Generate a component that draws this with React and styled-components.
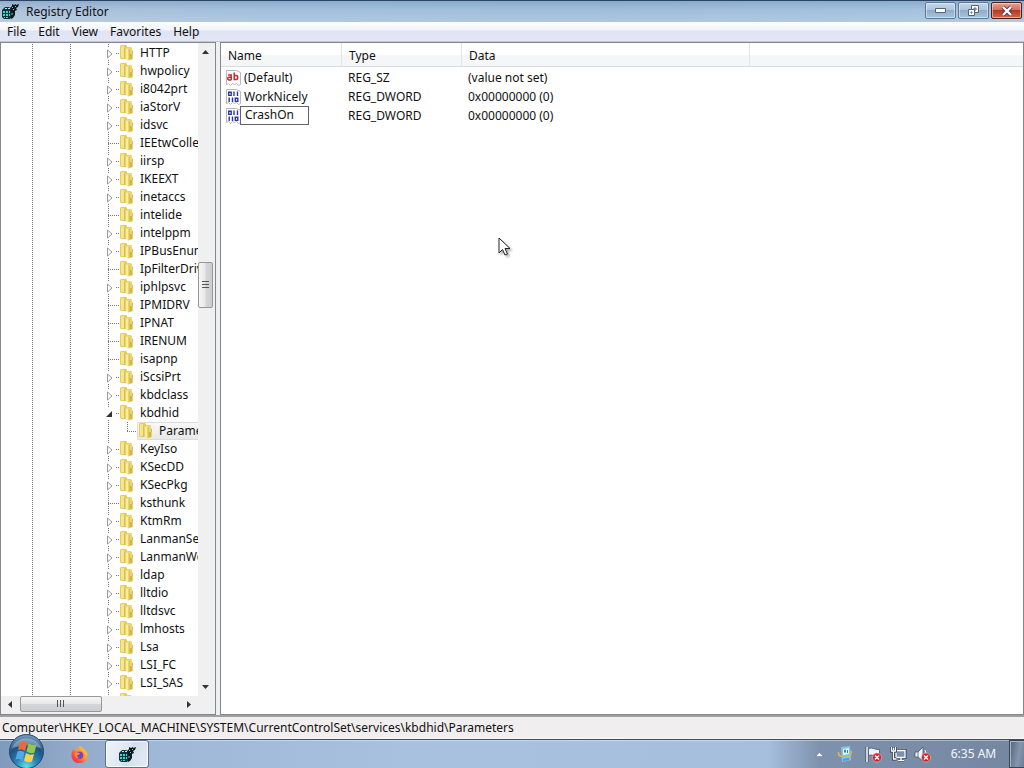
// src/App.jsx

import React, { useState } from 'react';
import styled, { createGlobalStyle } from 'styled-components';

const GlobalStyle = createGlobalStyle`
    * { box-sizing: border-box; }
    body {
        margin: 0;
        overflow: hidden;
        background: #f0f0f0;
    }
    body, button, input, table {
        font-family: 'Noto Sans', 'Open Sans', sans-serif;
        font-size: 12px;
        line-height: 18px;
        color: #111;
    }
    button, input {
        margin: 0;
        padding: 0;
        border: none;
        background: none;
    }
`;

// --- Window frame ---
const Desktop = styled.div`
    height: 100vh;
    display: flex;
    flex-direction: column;
`;

const TitleBar = styled.header`
    height: 22px;
    display: flex;
    align-items: center;
    gap: 7px;
    padding-left: 2px;
    border-top: 1px solid #2c4564;
    background:
        linear-gradient(rgba(70, 110, 155, 0.25), rgba(255, 255, 255, 0) 40%, rgba(255, 255, 255, 0.15)),
        linear-gradient(90deg, #adc3db 0%, #a3bfdc 25%, #9fbddb 60%, #a5c2de 100%);
`;

const Title = styled.h1`
    flex: 1;
    margin: 0;
    font-size: 12px;
    font-weight: 400;
    line-height: 18px;
`;

const WindowButtons = styled.div`
    align-self: flex-start;
    display: flex;
    gap: 2px;
    padding: 1px 2px 0 0;
`;

const WindowButton = styled.button`
    width: 31px;
    height: 17px;
    display: grid;
    place-items: center;
    border: 1px solid ${p => (p.$danger ? '#4c1d1b' : '#5c7896')};
    border-radius: 2px;
    box-shadow: inset 0 0 0 1px rgba(255, 255, 255, 0.45);
    background: ${p => (p.$danger
        ? 'linear-gradient(#e3a292, #d0705c 45%, #b83822 50%, #cf6a50)'
        : 'linear-gradient(#c3d6e8, #adc5dd 45%, #8fadcb 50%, #a9c4dc)')};
`;

const MenuBar = styled.nav`
    height: 20px;
    display: flex;
    align-items: center;
    padding-left: 7px;
    gap: 12px;
    border-bottom: 1px solid #c4c6d2;
    background: linear-gradient(#fdfdff, #f2f4fb 40%, #e0e3f3 50%, #e4e7f5);
`;

const MenuItem = styled.button`
    line-height: 18px;
`;

const Panes = styled.main`
    flex: 1;
    min-height: 0;
    display: grid;
    grid-template-columns: 216px 1fr;
    gap: 4px;
    background: #f0f0f0;
`;

const Pane = styled.section`
    min-width: 0;
    min-height: 0;
    border: 1px solid #828790;
    background: #fff;
`;

// --- Key tree ---
const TreePane = styled(Pane)`
    display: grid;
    grid-template-columns: 1fr 17px;
    grid-template-rows: 1fr 18px;
`;

const Tree = styled.ul`
    margin: 0;
    padding: 1px 0 0;
    list-style: none;
    min-height: 0;
    overflow: hidden;
`;

const TreeRow = styled.li`
    height: 18px;
    display: flex;
    white-space: nowrap;
`;

const Guide = styled.span`
    flex: none;
    width: ${p => p.$width}px;
    background: repeating-linear-gradient(#777 0 1px, transparent 1px 2px) right / 1px 100% no-repeat;
`;

const Branch = styled.span`
    flex: none;
    display: flex;
    padding-left: ${p => (p.$child ? 0 : 34)}px;
`;

const Toggle = styled.button`
    display: flex;
`;

const KeyLabel = styled.span`
    flex: 1;
    display: flex;
    align-items: center;
    gap: 6px;
    overflow: hidden;

    svg { flex: none; }

    ${p => p.$selected && `
        border: 1px solid #dcdcdc;
        border-right: none;
        border-radius: 2px 0 0 2px;
        padding-left: 1px;
        background: linear-gradient(#f8f8f8, #e8e8e8);
    `}
`;

const ScrollTrack = styled.div`
    display: flex;
    flex-direction: ${p => (p.$vertical ? 'column' : 'row')};
    background: #f0f0f0;
    padding: ${p => (p.$vertical ? '0 2px 0 0' : '0 0 2px')};
`;

const ScrollArrow = styled.button`
    flex: none;
    width: ${p => (p.$vertical ? 'auto' : '19px')};
    height: ${p => (p.$vertical ? '19px' : 'auto')};
    display: grid;
    place-items: center;
`;

const ScrollSpace = styled.span`
    flex: ${p => p.$grow} 1 0;
`;

const ScrollThumb = styled.button`
    flex: none;
    width: ${p => (p.$vertical ? 'auto' : '82px')};
    height: ${p => (p.$vertical ? '46px' : 'auto')};
    display: grid;
    place-items: center;
    border: 1px solid #979797;
    border-radius: 2px;
    background: linear-gradient(${p => (p.$vertical ? '90deg' : '180deg')}, #f6f6f6, #e8e8e9 48%, #d4d5d7 52%, #cdced1);
`;

const Corner = styled.div`
    background: #f0f0f0;
`;

// --- Value list ---
const ValueTable = styled.table`
    width: 100%;
    table-layout: fixed;
    border-collapse: separate;
    border-spacing: 0;

    th {
        height: 24px;
        padding: 2px 0 0 7px;
        font-weight: 400;
        text-align: left;
        border-right: 1px solid #e2e5e9;
        border-bottom: 1px solid #d9dcdf;
        background: linear-gradient(#fff 50%, #f5f6f7 55%);
    }
    th:last-child { border-right: none; }
    td {
        height: 19px;
        padding: 0 0 0 6px;
        white-space: nowrap;
    }
    td:first-child { padding-left: 5px; }
    tbody::before {
        content: '';
        display: block;
        height: 1px;
    }
`;

const NameCell = styled.div`
    height: 19px;
    display: flex;
    align-items: center;
    gap: ${p => (p.$editing ? 0 : 3)}px;

    svg { flex: none; }
`;

const NameInput = styled.input`
    width: 69px;
    height: 19px;
    margin-left: -1px;
    padding: 0 4px 2px;
    border: 1px solid #646464;
    background: #fff;
    outline: none;
`;

const StatusBar = styled.footer`
    height: 24px;
    padding: 2px 2px 0;
    border-top: 2px solid #a0a0a0;
    border-bottom: 1px solid #f8f8f8;
    background: #f0eeee;
    white-space: nowrap;
`;

// --- Taskbar ---
const Taskbar = styled.div`
    height: 29px;
    display: flex;
    border-top: 1px solid #3d4b5e;
    box-shadow: inset 0 1px 0 rgba(255, 255, 255, 0.4);
    background: linear-gradient(90deg, #7f9abb 0%, #92a9c8 7%, #9fb8d8 15%, #a7c1de 40%, #a5bfdd 75%, #7f92ad 80%, #7486a0 100%);
`;

const StartButton = styled.button`
    position: relative;
    width: 54px;

    svg {
        position: absolute;
        left: 8px;
        bottom: -1px;
    }
`;

const TaskButton = styled.button`
    width: ${p => (p.$active ? 44 : 51)}px;
    display: grid;
    place-items: center;
    ${p => p.$active && `
        border: 1px solid #5e6f86;
        border-radius: 3px;
        box-shadow: inset 0 0 0 1px rgba(255, 255, 255, 0.8);
        background: linear-gradient(115deg, #eef4fa, #dde6f1 50%, #d2deec 52%, #e4ecf5);
    `}
`;

const Tray = styled.div`
    margin-left: auto;
    display: flex;
    align-items: center;
`;

const TrayButton = styled.button`
    width: ${p => p.$width || 25}px;
    display: grid;
    place-items: center;
`;

const Clock = styled.time`
    width: 71px;
    text-align: center;
    color: #f4f7fb;
`;

const ShowDesktop = styled.button`
    align-self: stretch;
    width: 15px;
    border: 1px solid #3a4656;
    border-right: none;
    box-shadow: inset 1px 1px 0 #a8b5c6;
    background: linear-gradient(100deg, #55657b, #8495ad 60%, #6c7d95);
`;

const Pointer = styled.svg`
    position: fixed;
    left: 498px;
    top: 237px;
    pointer-events: none;
    filter: drop-shadow(2px 2px 1px rgba(0, 0, 0, 0.3));
`;

// --- Icons ---
function RegeditIcon() {
    return (
        <svg width="17" height="17" viewBox="0 0 17 17" aria-hidden="true">
            <path d="M0 7l3-3h4l4 3v6l-3 3H2l-2-2z" fill="#0d3438" />
            <path d="M1 8h2v2H1zM4 8h2v2H4zM7 8h1v2H7zM1 11h2v2H1zM4 11h2v2H4zM7 11h1v2H7zM2 14h1v1H2zM4 14h2v1H4z" fill="#43d3cc" />
            <path d="M3 5h2v1H3zM6 5h2v1H6z" fill="#a8efea" />
            <path d="M8 5l2-2V1l2 1 2-1v1l3-1-1 3-2 1 1 2-2 1v4l-2 3-2 1V8z" fill="#11191c" />
            <path d="M10 4l1 1M13 3l1 1M11 7l1-1M10 10v2" stroke="#5fd6d0" />
        </svg>
    );
}

function FolderIcon() {
    return (
        <svg width="14" height="16" viewBox="0 0 14 16" aria-hidden="true">
            <path d="M0 1l1-1h5l1 1v13H1l-1-1z" fill="#e6cc58" />
            <path d="M1 1h3v12H1z" fill="#f4e68e" />
            <path d="M7 2h4l1 1v2l1 1v8l-2 1H7z" fill="#ecd66c" />
            <path d="M5 3l4 1v12l-4-2z" fill="#f8eda0" />
            <path d="M9 4v11M5 3v11" stroke="#c9a93a" strokeWidth=".8" />
            <path d="M10 9h2v5h-2z" fill="#d2b444" />
            <path d="M12 6h1v3h-1z" fill="#b5c289" />
        </svg>
    );
}

function ValueIcon({ binary }) {
    return (
        <svg width="15" height="16" viewBox="0 0 15 16" aria-hidden="true">
            <path d="M.5.5h10l4 2v12l-2 1-2-2-2 1-2-1-2 2-2-2-2 1z" fill="#fdfdff" stroke="#b5b8c4" />
            {binary ? (
                <g fill="none" stroke="#2a35a8" strokeWidth="1.400">
                    <path d="M2.700 3.200h2.500v3.200H2.700zM8 2.500v4.500M11.500 2.500v4.500M3.200 8.500v4.500M6.500 8.500v4.500M9.300 9.200h2.500v3.200H9.300z" />
                </g>
            ) : (
                <g fill="none" stroke="#c02b2b" strokeWidth="1.500">
                    <path d="M2 5h3.200v5.200M5 7.300H3a1.300 1.300 0 0 0 0 2.600h2M8.200 2.500v7.700M8.200 5.500h2q1.500 0 1.500 2t-1.500 2h-2" />
                </g>
            )}
        </svg>
    );
}

function BranchLines({ kind }) {
    return (
        <svg width="15" height="18" viewBox="0 0 15 18" shapeRendering="crispEdges" aria-hidden="true">
            <g stroke="#777" strokeDasharray="1 1">
                {kind === 'leaf'
                    ? <path d="M3.500 0v18M3 9.500h12" />
                    : <path d="M3.500 0v4M3.500 16v2M11 9.500h4" />}
            </g>
            {kind === 'closed' && (
                <path d="M2.500 6v8l4.500-4z" fill="#fff" stroke="#999" shapeRendering="auto" />
            )}
            {kind === 'open' && (
                <path d="M7 7v6H1z" fill="#333" shapeRendering="auto" />
            )}
        </svg>
    );
}

function ChildLines() {
    return (
        <svg width="28" height="18" viewBox="0 0 28 18" shapeRendering="crispEdges" aria-hidden="true">
            <path d="M18.500 0v10M18 9.500h10" fill="none" stroke="#777" strokeDasharray="1 1" />
        </svg>
    );
}

function Arrow({ direction }) {
    const paths = {
        up: 'M0 5l3.500-4L7 5z',
        down: 'M0 2h7L3.500 6z',
        left: 'M5 0v7L1 3.500z',
        right: 'M2 0v7l4-3.500z',
    };
    return (
        <svg width="7" height="7" viewBox="0 0 7 7" aria-hidden="true">
            <path d={paths[direction]} fill="#333" />
        </svg>
    );
}

function Grip({ vertical }) {
    return (
        <svg width="8" height="8" viewBox="0 0 8 8" aria-hidden="true">
            <path
                d={vertical ? 'M0 .5h7M0 3.500h7M0 6.500h7' : 'M.5 0v7M3.500 0v7M6.500 0v7'}
                stroke="#555"
            />
        </svg>
    );
}

function StartOrb() {
    return (
        <svg width="37" height="36" viewBox="0 0 37 36" aria-hidden="true">
            <defs>
                <radialGradient id="orb" cx="50%" cy="95%" r="90%">
                    <stop offset="0" stopColor="#5fe0f6" />
                    <stop offset=".35" stopColor="#2a86b8" />
                    <stop offset=".7" stopColor="#1f5182" />
                    <stop offset="1" stopColor="#6f94b8" />
                </radialGradient>
            </defs>
            <circle cx="18.500" cy="18.500" r="17" fill="url(#orb)" stroke="#24476d" />
            <path d="M4 15a15 13 0 0 1 29 0q-14-5-29 0z" fill="#fff" opacity=".3" />
            <path d="M12 9q4-2 7 1l-2 8q-3-3-7-1z" fill="#ee6a34" />
            <path d="M20.500 10.500q4 3 8 1l-2 8q-4 2-8-1z" fill="#94c84b" />
            <path d="M9.500 18.500q4-2 7 1l-2 8q-3-3-7-1z" fill="#4fa8e8" />
            <path d="M18 20q4 3 8 1l-2 7.500q-4 2-8-1z" fill="#fbd04c" />
        </svg>
    );
}

function FirefoxIcon() {
    return (
        <svg width="17" height="17" viewBox="0 0 17 17" aria-hidden="true">
            <defs>
                <linearGradient id="fox" x1="1" y1="0" x2="0" y2="1">
                    <stop offset="0" stopColor="#ffe14a" />
                    <stop offset=".45" stopColor="#ff9227" />
                    <stop offset=".75" stopColor="#fb3f45" />
                    <stop offset="1" stopColor="#e3207c" />
                </linearGradient>
            </defs>
            <path d="M10 0q1 2 3 3 4 3 3.500 7A8 7.500 0 0 1 .5 9.500Q.5 5 3 2.500q0 1.500 1 2l2-.5q0-2.500 4-4z" fill="url(#fox)" />
            <circle cx="8.600" cy="9.300" r="3.700" fill="#7a42c8" />
            <path d="M3.500 6.500q3-1 5.500 1-1 1.500-3 1.700 0 2 2.500 3Q5 13 4 10z" fill="#ff8a2a" />
        </svg>
    );
}

function ErrorBadge() {
    return (
        <g>
            <circle cx="12" cy="11.500" r="4.500" fill="#d3222a" stroke="#f0c4c4" strokeWidth=".6" />
            <path d="M10 9.500l4 4M14 9.500l-4 4" stroke="#fff" strokeWidth="1.400" />
        </g>
    );
}

function UpdateIcon() {
    return (
        <svg width="16" height="17" viewBox="0 0 16 17" aria-hidden="true">
            <path d="M4 1l9-1 1 14-9 2z" fill="#7fc3ea" />
            <path d="M6 3l6-1v6l-6 1z" fill="#dff4fb" />
            <path d="M7 4l2-.5v3H7z" fill="#3c9950" />
            <path d="M10 4h1v3h-1z" fill="#3a7fc0" />
            <path d="M1.500 6q-.5 5 5 4.500M14 5q1.500 5-4.500 6" fill="none" stroke="#dfb548" strokeWidth="1.600" />
            <path d="M6 13l6-1v2l-6 1z" fill="#4a9fd8" />
        </svg>
    );
}

function FlagIcon() {
    return (
        <svg width="17" height="17" viewBox="0 0 17 17" aria-hidden="true">
            <path d="M2 1v15" stroke="#3b4a5e" strokeWidth="3" />
            <path d="M2 1v15" stroke="#fff" strokeWidth="1.500" />
            <path d="M3.500 2.500q3-1 5 0t6 1v7q-4 0-6-1t-5 0z" fill="#eef1f5" stroke="#46566c" strokeWidth=".8" />
            <ErrorBadge />
        </svg>
    );
}

function NetworkIcon() {
    return (
        <svg width="17" height="17" viewBox="0 0 17 17" aria-hidden="true">
            <path d="M6 4.500h9v7H6zM8 14.500h6M11 12v2" fill="none" stroke="#303d4e" strokeWidth="3" />
            <path d="M6 4.500h9v7H6zM8 14.500h6M11 12v2" fill="#7c92ac" stroke="#fff" strokeWidth="1.300" />
            <path d="M1.500 1v4h4V1M3.500 5v8h3" fill="none" stroke="#303d4e" strokeWidth="3" />
            <path d="M1.500 1v4h4V1M3.500 5v8h3M3.500 2v2" fill="none" stroke="#fff" strokeWidth="1.300" />
        </svg>
    );
}

function VolumeIcon() {
    return (
        <svg width="17" height="17" viewBox="0 0 17 17" aria-hidden="true">
            <path d="M1 6h3l5-5v14l-5-4H1z" fill="#f3f5f8" stroke="#46566c" strokeWidth=".8" />
            <path d="M4 6v5" stroke="#66768c" />
            <path d="M11 4q2 3 0 6" fill="none" stroke="#fff" />
            <ErrorBadge />
        </svg>
    );
}

// closed = has subkeys, leaf = no subkeys
const keys = [
    ['HTTP', 'closed'], ['hwpolicy', 'closed'], ['i8042prt', 'closed'], ['iaStorV', 'closed'],
    ['idsvc', 'closed'], ['IEEtwCollectorService', 'leaf'], ['iirsp', 'closed'], ['IKEEXT', 'closed'],
    ['inetaccs', 'closed'], ['intelide', 'leaf'], ['intelppm', 'closed'], ['IPBusEnum', 'closed'],
    ['IpFilterDriver', 'leaf'], ['iphlpsvc', 'closed'], ['IPMIDRV', 'leaf'], ['IPNAT', 'leaf'],
    ['IRENUM', 'leaf'], ['isapnp', 'leaf'], ['iScsiPrt', 'closed'], ['kbdclass', 'closed'],
    ['kbdhid', 'open'], ['Parameters', 'child'], ['KeyIso', 'closed'], ['KSecDD', 'closed'],
    ['KSecPkg', 'closed'], ['ksthunk', 'leaf'], ['KtmRm', 'closed'], ['LanmanServer', 'closed'],
    ['LanmanWorkstation', 'closed'], ['ldap', 'closed'], ['lltdio', 'closed'], ['lltdsvc', 'closed'],
    ['lmhosts', 'closed'], ['Lsa', 'closed'], ['LSI_FC', 'closed'], ['LSI_SAS', 'closed'],
    ['', 'closed'],
];

const values = [
    { name: '(Default)', type: 'REG_SZ', data: '(value not set)' },
    { name: 'WorkNicely', type: 'REG_DWORD', data: '0x00000000 (0)' },
    { name: 'CrashOn', type: 'REG_DWORD', data: '0x00000000 (0)', editing: true },
];

function KeyRow({ name, kind }) {
    const child = kind === 'child';
    const expandable = kind === 'closed' || kind === 'open';

    return (
        <TreeRow>
            <Guide $width={32} />
            <Guide $width={38} />
            {child && <Guide $width={38} />}
            <Branch $child={child}>
                {child && <ChildLines />}
                {kind === 'leaf' && <BranchLines kind={kind} />}
                {expandable && (
                    <Toggle aria-label={`Toggle ${name}`}><BranchLines kind={kind} /></Toggle>
                )}
            </Branch>
            <KeyLabel $selected={child}>
                <FolderIcon />
                {name}
            </KeyLabel>
        </TreeRow>
    );
}

function App() {
    const [editName, setEditName] = useState('CrashOn');

    return (
        <>
            <GlobalStyle />
            <Desktop>
                <TitleBar>
                    <RegeditIcon />
                    <Title>Registry Editor</Title>
                    <WindowButtons>
                        <WindowButton aria-label="Minimize">
                            <svg width="12" height="6"><path d="M.5.5h10v4H.5z" fill="#fff" stroke="#53647a" /></svg>
                        </WindowButton>
                        <WindowButton aria-label="Restore">
                            <svg width="13" height="12">
                                <path d="M4.500.5h7v7h-7zM7 3h2v2H7z" fill="#fff" stroke="#53647a" />
                                <path d="M1.500 4.500h6v6h-6zM4 7h1v1H4z" fill="#fff" stroke="#53647a" />
                            </svg>
                        </WindowButton>
                        <WindowButton $danger aria-label="Close">
                            <svg width="12" height="10">
                                <path d="M2 1l8 8M10 1L2 9" stroke="#54303a" strokeWidth="4" />
                                <path d="M2 1l8 8M10 1L2 9" stroke="#fff" strokeWidth="2.400" />
                            </svg>
                        </WindowButton>
                    </WindowButtons>
                </TitleBar>

                <MenuBar>
                    {['File', 'Edit', 'View', 'Favorites', 'Help'].map(item => (
                        <MenuItem key={item}>{item}</MenuItem>
                    ))}
                </MenuBar>

                <Panes>
                    <TreePane>
                        <Tree>
                            {keys.map(([name, kind], i) => <KeyRow key={i} name={name} kind={kind} />)}
                        </Tree>
                        <ScrollTrack $vertical>
                            <ScrollArrow $vertical aria-label="Scroll up"><Arrow direction="up" /></ScrollArrow>
                            <ScrollSpace $grow={200} />
                            <ScrollThumb $vertical aria-label="Vertical scroll"><Grip vertical /></ScrollThumb>
                            <ScrollSpace $grow={369} />
                            <ScrollArrow $vertical aria-label="Scroll down"><Arrow direction="down" /></ScrollArrow>
                        </ScrollTrack>
                        <ScrollTrack>
                            <ScrollArrow aria-label="Scroll left"><Arrow direction="left" /></ScrollArrow>
                            <ScrollThumb aria-label="Horizontal scroll"><Grip /></ScrollThumb>
                            <ScrollSpace $grow={1} />
                            <ScrollArrow aria-label="Scroll right"><Arrow direction="right" /></ScrollArrow>
                        </ScrollTrack>
                        <Corner />
                    </TreePane>

                    <Pane>
                        <ValueTable>
                            <colgroup>
                                <col width="121" />
                                <col width="120" />
                                <col width="288" />
                                <col />
                            </colgroup>
                            <thead>
                                <tr><th>Name</th><th>Type</th><th>Data</th><th aria-label="Empty" /></tr>
                            </thead>
                            <tbody>
                                {values.map(v => (
                                    <tr key={v.name}>
                                        <td>
                                            <NameCell $editing={v.editing}>
                                                <ValueIcon binary={v.type === 'REG_DWORD'} />
                                                {v.editing ? (
                                                    <NameInput
                                                        aria-label="Value name"
                                                        value={editName}
                                                        onChange={e => setEditName(e.target.value)}
                                                    />
                                                ) : v.name}
                                            </NameCell>
                                        </td>
                                        <td>{v.type}</td>
                                        <td>{v.data}</td>
                                    </tr>
                                ))}
                            </tbody>
                        </ValueTable>
                    </Pane>
                </Panes>

                <StatusBar>
                    Computer\HKEY_LOCAL_MACHINE\SYSTEM\CurrentControlSet\services\kbdhid\Parameters
                </StatusBar>

                <Taskbar>
                    <StartButton aria-label="Start"><StartOrb /></StartButton>
                    <TaskButton aria-label="Firefox"><FirefoxIcon /></TaskButton>
                    <TaskButton $active aria-label="Registry Editor"><RegeditIcon /></TaskButton>
                    <Tray>
                        <TrayButton aria-label="Show hidden icons">
                            <svg width="9" height="5"><path d="M.5 4.500l4-4 4 4z" fill="#fff" stroke="#5a6a80" strokeWidth=".5" /></svg>
                        </TrayButton>
                        <TrayButton aria-label="Updates"><UpdateIcon /></TrayButton>
                        <TrayButton $width={33} aria-label="Action Center"><FlagIcon /></TrayButton>
                        <TrayButton $width={16} aria-label="Network"><NetworkIcon /></TrayButton>
                        <TrayButton $width={32} aria-label="Volume"><VolumeIcon /></TrayButton>
                        <Clock>6:35 AM</Clock>
                        <ShowDesktop aria-label="Show desktop" />
                    </Tray>
                </Taskbar>
            </Desktop>
            <Pointer width="14" height="20" viewBox="0 0 14 20" aria-hidden="true">
                <path d="M1 1v15l3.500-3.500 2.500 5.500 2.500-1-2.500-5.500H12z" fill="#fff" stroke="#222" />
            </Pointer>
        </>
    );
}

export default App;
